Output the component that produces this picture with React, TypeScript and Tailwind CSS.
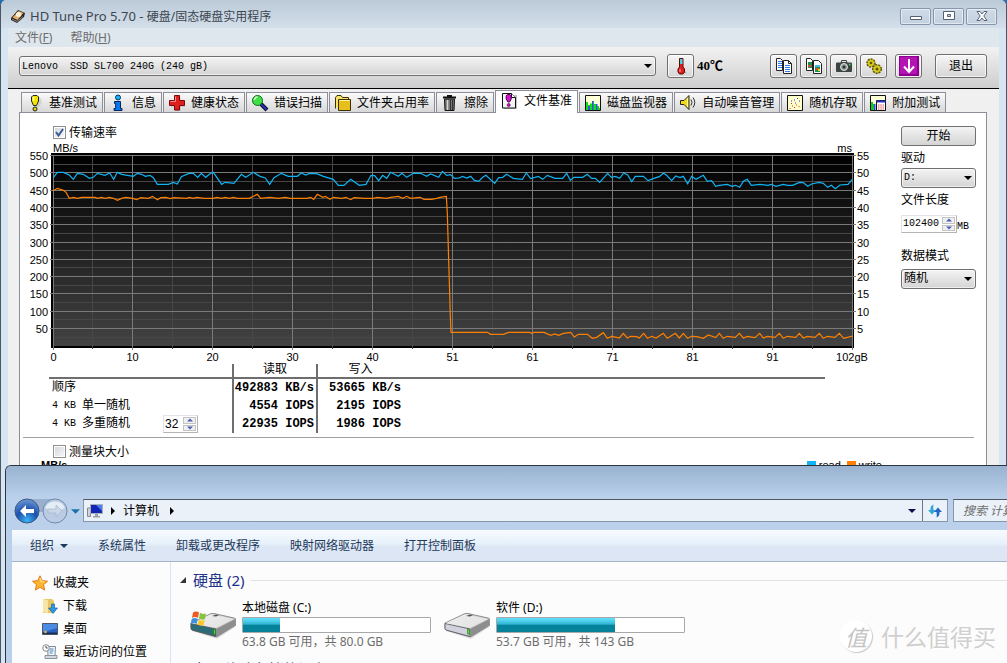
import React, { useState } from 'react';

const UI = "font-['Noto_Sans','Noto_Sans_CJK_SC',sans-serif]";
const SONG = "font-['Liberation_Mono','Noto_Sans_CJK_SC',monospace]";

/* ---------- small icons ---------- */

const ExclaimIcon = () => (
  <svg viewBox="0 0 18 18" className="h-[18px] w-[18px] shrink-0">
    <path d="M9.500 3.500h4l2 2v4l-3 3.500h-2z" fill="#bbb" opacity=".5" />
    <path d="M7 1.500h4l1.500 1.500v4L10.500 11.500h-3L5.500 7V3z" fill="#f2e600" stroke="#222" />
    <path d="M7.500 3v4" stroke="#fffcae" strokeWidth="1.500" />
    <circle cx="9" cy="15" r="2" fill="#e6d800" stroke="#222" />
  </svg>
);

const InfoIcon = () => (
  <svg viewBox="0 0 18 18" className="h-[18px] w-[18px] shrink-0">
    <circle cx="9" cy="3.500" r="2.500" fill="#19b4f5" stroke="#03336b" />
    <path d="M5.500 7.500h6v7h1.500v2h-8v-2h1.700v-5h-1.200z" fill="#0a78f0" stroke="#02235c" />
  </svg>
);

const CrossIcon = () => (
  <svg viewBox="0 0 18 18" className="h-[18px] w-[18px] shrink-0">
    <path d="M7.500 3.500h5v4h4.500v5h-4.500v4.500h-5v-4.500H3v-5h4.500z" fill="#999" opacity=".6" />
    <path d="M6.500 1.500h5v5h5v5h-5v4.500h-5v-4.500H1.500v-5h5z" fill="#e01f1f" stroke="#7a0808" />
    <path d="M7.500 2.500v5h-5" stroke="#ff8d8d" fill="none" />
  </svg>
);

const LensIcon = () => (
  <svg viewBox="0 0 18 18" className="h-[18px] w-[18px] shrink-0">
    <path d="M10 10l6 6" stroke="#111" strokeWidth="4" />
    <path d="M10 10l5.500 5.500" stroke="#2034c8" strokeWidth="2" />
    <circle cx="6.500" cy="6.500" r="5" fill="#3ee045" stroke="#0b6b17" />
    <path d="M3.500 6a3 3 0 0 1 3-3" stroke="#d8ffd0" strokeWidth="1.500" fill="none" />
  </svg>
);

const FolderIcon = () => (
  <svg viewBox="0 0 18 18" className="h-[18px] w-[18px] shrink-0">
    <path d="M1.500 14.500v-11l1.500-2h4l1.500 2h6v3" fill="#f8e36a" stroke="#3c3200" />
    <path d="M4.500 5.500h12v11h-12z" fill="#e8bf1a" stroke="#3c3200" />
    <path d="M5.500 6.500h10" stroke="#fff2a0" />
  </svg>
);

const TrashIcon = () => (
  <svg viewBox="0 0 18 18" className="h-[18px] w-[18px] shrink-0">
    <path d="M2 3.500h13M6 2h5" stroke="#111" strokeWidth="2" />
    <path d="M3.500 5h10l-.5 11.500H4z" fill="#777" stroke="#111" />
    <path d="M6.500 6v10" stroke="#d5d5d5" strokeWidth="1.500" />
    <path d="M9.500 6v10M11.500 6v10" stroke="#333" />
  </svg>
);

const FileMarkIcon = () => (
  <svg viewBox="0 0 18 18" className="h-[18px] w-[18px] shrink-0">
    <path d="M4 3h13v14H4z" fill="#999" opacity=".6" />
    <path d="M2.500 1.500h9l4 4v10.500h-13z" fill="#f4f4f4" stroke="#111" />
    <path d="M11.500 1.500v4h4" fill="#fff" stroke="#111" />
    <path d="M7.500 2.500h2.500l1.200 1.500v3L9.500 10h-1.500L6.200 7V4z" fill="#d412d4" stroke="#4c004c" />
    <circle cx="8.700" cy="13" r="1.500" fill="#d412d4" stroke="#4c004c" strokeWidth=".7" />
  </svg>
);

const MonitorIcon = () => (
  <svg viewBox="0 0 18 18" className="h-[18px] w-[18px] shrink-0">
    <path d="M1.500 1.500h15v15h-15z" fill="#ffffd8" stroke="#111" />
    <path d="M2 8h2v3h2v-1.500h2.500V7H10v3h3v2h2v2h1v2H2z" fill="#10e010" />
    <path d="M4 12h2v4H4zM8 7h1.500v9H8zM12 10h1.500v6H12z" fill="#3a4cf0" />
  </svg>
);

const SpeakerIcon = () => (
  <svg viewBox="0 0 18 18" className="h-[18px] w-[18px] shrink-0">
    <path d="M1.500 6.500h3.500l5-5v14l-5-5H1.500z" fill="#f0dc10" stroke="#222" />
    <path d="M8.500 4v9" stroke="#fff9a0" />
    <path d="M12 5.500q2 3 0 6M14 3.500q3.500 5 0 10" fill="none" stroke="#333" />
  </svg>
);

const ScatterIcon = () => (
  <svg viewBox="0 0 18 18" className="h-[18px] w-[18px] shrink-0">
    <path d="M1.500 1.500h15v15h-15z" fill="#ffffcc" stroke="#111" />
    <path d="M5 7h1M8 6h1M11 4.500h1M13 7h1M9 9h1" stroke="#2838e0" />
    <path d="M3.500 14.500h1M6 12h1M8 13.500h1M10 11h1M12.500 12.500h1M5 9.500h1" stroke="#e03020" />
  </svg>
);

const ExtraIcon = () => (
  <svg viewBox="0 0 18 18" className="h-[18px] w-[18px] shrink-0">
    <path d="M1.500 1.500h15v15h-15z" fill="#ffffd8" stroke="#111" />
    <path d="M2 8h2v2h2v6H2z" fill="#10c828" />
    <path d="M5 10h1.500v6H5z" fill="#3a4cf0" />
    <path d="M7.500 6.500h9v10h-9z" fill="#fff" stroke="#111" />
    <path d="M7.500 7.500h9" stroke="#2434c8" strokeWidth="2" />
    <path d="M9 11h6M9 13h6M9 15h6" stroke="#e05050" strokeDasharray="1.500 .8" />
  </svg>
);

const TitleIcon = () => (
  <svg viewBox="0 0 16 16" className="h-4 w-4">
    <path d="M1 9L8 1l7 3-1 4-7 6-6-3z" fill="#2a2420" />
    <path d="M2.500 8.500L8.500 2l5 2-6 7z" fill="#e8b06a" />
    <circle cx="8.500" cy="5.500" r="2.500" fill="#fff1dc" />
    <path d="M2 10l5 2.500 6-5" stroke="#8b8b8b" fill="none" />
  </svg>
);

const ThermoIcon = () => (
  <svg viewBox="0 0 18 18" className="h-[18px] w-[18px]">
    <path d="M10 12l5 4H9z" fill="#aaa" />
    <path d="M7.500 1.500h3.500v8.500l1.500 2v3l-1.500 2H7.500l-1.500-2v-3l1.500-2z" fill="#e31c1c" stroke="#5d0a0a" />
    <path d="M8 2h2.500v5H8z" fill="#4bd0e0" />
    <path d="M8 12v3" stroke="#ffb0b0" />
  </svg>
);

const CopyTextIcon = () => (
  <svg viewBox="0 0 18 18" className="h-[18px] w-[18px]">
    <path d="M1.500 1.500h4l2 2v10h-6z" fill="#fff" stroke="#222" />
    <path d="M3 4.500h4M3 6.500h4M3 8.500h4M3 10.500h4" stroke="#2f7de0" />
    <path d="M8.500 3.500h5l3 3v10h-8z" fill="#fff" stroke="#222" />
    <path d="M13.500 3.500v3h3" fill="none" stroke="#222" />
    <path d="M10 8.500h5M10 10.500h5M10 12.500h5M10 14.500h5" stroke="#2f7de0" />
  </svg>
);

const CopyImageIcon = () => (
  <svg viewBox="0 0 18 18" className="h-[18px] w-[18px]">
    <path d="M1.500 1.500h4l2 2v10h-6z" fill="#fff" stroke="#222" />
    <path d="M3 5h4v6H3z" fill="#1f8f4c" />
    <path d="M3 8h3v2H3z" fill="#e84a20" />
    <path d="M8.500 3.500h5l3 3v10h-8z" fill="#fff" stroke="#222" />
    <path d="M10 8h5v7h-5z" fill="#1f8f4c" />
    <path d="M10 8h5v2h-5z" fill="#42b9e8" />
    <path d="M11 11h2.500v2H11z" fill="#e84a20" />
    <path d="M13 12h2v2h-2z" fill="#f2d21c" />
  </svg>
);

const CameraIcon = () => (
  <svg viewBox="0 0 18 18" className="h-[18px] w-[18px]">
    <path d="M2 5.500h3.500l1-2.500h5l1 2.500H16q1 0 1 1v7.500q0 1-1 1H2q-1 0-1-1V6.500q0-1 1-1z" fill="#3d4543" />
    <path d="M7 4.500h4" stroke="#e8e8e8" />
    <circle cx="9" cy="10" r="3.500" fill="#8c9896" stroke="#e0e0e0" />
    <circle cx="9" cy="10" r="1.500" fill="#2b3331" />
    <path d="M14 7.500h1.500" stroke="#3de06a" strokeWidth="1.500" />
  </svg>
);

const GearsIcon = () => (
  <svg viewBox="0 0 18 18" className="h-[18px] w-[18px]">
    <circle cx="6" cy="6" r="4" fill="#d6c81e" stroke="#5e5606" strokeWidth="1.500" strokeDasharray="2 1" />
    <circle cx="6" cy="6" r="1.300" fill="#5e5606" />
    <circle cx="12" cy="12" r="4.300" fill="#d6c81e" stroke="#5e5606" strokeWidth="1.500" strokeDasharray="2 1" />
    <circle cx="12" cy="12" r="1.500" fill="#5e5606" />
  </svg>
);

const DownIcon = () => (
  <svg viewBox="0 0 20 20" className="h-5 w-5">
    <path d="M0 0h20v20H0z" fill="#8d008d" />
    <path d="M1 1h17v17H1z" fill="#b414b4" />
    <path d="M10 3v13M5 10.500l5 5.500 5-5.500" fill="none" stroke="#fff" strokeWidth="2" />
  </svg>
);

/* ---------- controls ---------- */

const Caret = ({ className = '' }: { className?: string }) => (
  <svg viewBox="0 0 8 4" className={`h-1 w-2 ${className}`} aria-hidden="true">
    <path d="M0 0h8L4 4z" fill="currentColor" />
  </svg>
);

type DropProps = { label: string; options: string[]; className: string; textClass: string };

const Drop = ({ label, options, className, textClass }: DropProps) => (
  <div className={`relative ${className}`}>
    <select
      aria-label={label}
      className={`h-5 w-full appearance-none rounded-[3px] border border-[#707070] bg-linear-to-b from-[#f4f4f4] to-[#d4d4d4] pr-5 pl-[2px] text-black ring-1 ring-white/60 ring-inset ${SONG} ${textClass}`}
    >
      {options.map((o) => (
        <option key={o}>{o}</option>
      ))}
    </select>
    <Caret className="pointer-events-none absolute top-2 right-1" />
  </div>
);

type SpinProps = { label: string; value: string; className: string };

const Spinner = ({ label, value, className }: SpinProps) => {
  const [current, setCurrent] = useState(value);
  const step = (n: number) => setCurrent(String(Number(current) + n));

  return (
    <span className={`inline-flex h-[18px] border border-[#b4b4b4] border-t-[#e0e3ea] border-l-[#e0e3ea] bg-white ${className}`}>
      <input
        aria-label={label}
        value={current}
        onChange={(e) => setCurrent(e.target.value)}
        className="w-0 min-w-0 flex-1 pl-px outline-none"
      />
      <span className="flex w-[15px] flex-col gap-px p-px">
        <button aria-label={`${label} +`} onClick={() => step(1)} className="flex flex-1 items-center justify-center border border-[#c4c4c4] bg-[#f0f0f0]">
          <Caret className="w-[6px] rotate-180 text-[#4a5fb0]" />
        </button>
        <button aria-label={`${label} -`} onClick={() => step(-1)} className="flex flex-1 items-center justify-center border border-[#c4c4c4] bg-[#f0f0f0]">
          <Caret className="w-[6px] text-[#4a5fb0]" />
        </button>
      </span>
    </span>
  );
};

const Check = ({ label, checked }: { label: string; checked?: boolean }) => (
  <label className="flex h-[15px] items-center gap-[3px]">
    <span className="grid h-[13px] w-[13px]">
      <input
        type="checkbox"
        defaultChecked={checked}
        className="peer col-start-1 row-start-1 appearance-none border border-[#8e8f8f] bg-linear-to-br from-[#d2d6db] to-[#f8f8f8] ring-1 ring-white ring-inset"
      />
      <svg viewBox="0 0 13 13" className="pointer-events-none invisible col-start-1 row-start-1 peer-checked:visible">
        <path d="M3 6l2.500 3.500L10 3" fill="none" stroke="#3c5a96" strokeWidth="2" />
      </svg>
    </span>
    <span className="pt-[2px]">{label}</span>
  </label>
);

const toolButton =
  'flex h-[24px] items-center justify-center rounded-[3px] border border-[#707070] bg-linear-to-b from-[#f6f6f6] to-[#d6d6d6] ring-1 ring-white/70 ring-inset';

/* ---------- chart ---------- */

const READ_A =
  '40,83 52,67 70,67 88,75 100,88 112,70 130,73 148,85 160,82 172,70 195,76 209,69 221,88 232,67 245,73 280,79 292,70 305,73 316,79 330,76 340,83 352,103 385,103 400,97 412,102 424,80 447,70 460,70 473,82 484,70 497,82 508,73 520,67 545,103 555,97 582,100 604,73 617,82 640,67 660,79 676,84 689,103 702,83 724,70 745,79 772,79 784,69 797,75 808,70 830,71 850,79 880,88 895,106 912,106 932,88 958,106 978,103 993,76 1004,77 1016,92 1028,76 1040,85 1052,67 1075,79 1086,70 1100,82 1120,70 1142,70 1160,79 1172,72 1196,82 1207,64 1220,76 1232,74 1243,85 1258,84';
const READ_B =
  '27,84 38,79 50,84 62,79 73,91 86,94 98,82 108,76 134,100 146,83 158,82 170,73 190,85 217,88 229,69 242,86 265,79 278,88 292,76 315,85 338,85 350,70 361,91 372,82 398,82 412,73 425,85 436,85 449,97 473,70 484,82 496,79 509,85 521,69 533,75 545,95 556,79 580,79 594,92 618,83 628,80 640,70 650,76 665,92 677,78 690,83 700,79 713,101 725,79 738,88 760,76 772,94 785,92 797,109 808,106 832,103 846,109 857,106 869,112 880,94 892,88 904,106 930,103 954,106 964,103 978,109 1000,103 1012,106 1028,106 1048,97 1060,98 1073,109 1085,102 1107,97 1120,100 1133,112 1144,106 1156,116 1170,105 1194,103 1207,88';
const WRITE_A =
  '40,122 52,115 70,121 78,127 88,145 100,142 112,145 125,142 165,142 173,145 184,142 196,145 208,142 220,145 232,151 245,145 257,142 278,145 290,149 302,143 325,145 338,139 352,149 362,143 378,142 390,146 402,143 440,145 448,142 460,145 470,142 492,145 520,145 530,142 545,145 555,142 568,145 580,142 592,145 628,145 640,139 652,133 662,145 690,142 715,145 736,142 750,145 800,145 812,142 821,148 832,133 848,142 856,139 870,148 880,142 905,145 918,142 932,149 942,143 975,145 1000,145 1012,142 1040,145 1052,142 1075,139 1088,145 1100,139 1112,145 1140,142 1152,148 1175,148 1190,145 1200,142 1219,139';
const WRITE_B =
  '49,48 52,102 55,205 58,306 61,408 63,457 172,457 182,463 220,463 236,457 298,457 306,460 312,457 342,457 362,466 374,462 386,466 400,460 422,457 433,471 445,463 472,463 487,475 500,472 520,458 532,475 545,469 560,472 568,474 580,460 592,474 602,469 620,470 628,474 641,460 653,475 665,469 678,474 700,460 712,475 736,460 748,474 760,460 773,475 785,469 800,470 820,475 835,465 857,473 868,460 880,475 892,469 916,472 928,460 940,474 952,469 975,473 989,460 1000,474 1012,469 1035,472 1048,460 1060,475 1072,469 1097,472 1108,460 1120,474 1132,469 1155,472 1168,460 1180,475 1192,469 1215,472 1228,460 1241,475 1252,472 1268,468';

const xLabels = ['0', '10', '20', '30', '40', '51', '61', '71', '81', '91', '102gB'];
const rows = Array.from({ length: 11 }, (_, i) => i);

const gridX = (i: number) => (i === 0 ? 27.5 : 26.5 + i * 80);
const gridY = (i: number) => Math.round(15 + i * 17.3) + 0.5;

const Curve = ({ points, x, y, color }: { points: string; x: number; y: number; color: string }) => (
  <polyline
    points={points}
    transform={`translate(${x} ${y}) scale(.33333)`}
    fill="none"
    stroke={color}
    strokeWidth="1.2"
    vectorEffect="non-scaling-stroke"
  />
);

const TransferChart = () => (
  <svg viewBox="0 0 850 224" className="block w-full font-['Liberation_Sans',sans-serif]" fontSize="11" role="img" aria-label="传输速率">
    <defs>
      <linearGradient id="plot" x1="0" y1="0" x2="0" y2="1">
        <stop offset="0" stopColor="#000" />
        <stop offset="1" stopColor="#434343" />
      </linearGradient>
    </defs>
    <text x="27" y="12">MB/s</text>
    <text x="826" y="12" textAnchor="end">ms</text>
    <path d="M25 13h803v195H25z" fill="#000" />
    <path d="M27 15h800v191H27z" fill="url(#plot)" />

    {rows.map((i) => (
      <g key={i}>
        <path d={`M27 ${gridY(i + 0.5)}h800`} stroke="#474747" />
        {i > 0 && i < 10 && <path d={`M${gridX(i + 0.5)} 15v194`} stroke="#474747" />}
      </g>
    ))}
    <path d="M66.500 15v194" stroke="#474747" />
    {rows.map((i) => (
      <g key={i}>
        <path d={`M24 ${gridY(i)}h806`} stroke="#7a7a7a" />
        <path d={`M${gridX(i)} 15v195`} stroke="#7a7a7a" />
        <text x="22" y={gridY(i) + 4} textAnchor="end">
          {550 - i * 50}
        </text>
        <text x="831" y={gridY(i) + 4}>
          {55 - i * 5}
        </text>
        <text x={i === 10 ? 826 : gridX(i)} y="221" textAnchor="middle">
          {xLabels[i]}
        </text>
      </g>
    ))}

    <Curve points={READ_A} x={14} y={10} color="#10b4f4" />
    <Curve points={READ_B} x={424} y={10} color="#10b4f4" />
    <Curve points={WRITE_A} x={14} y={10} color="#ff8000" />
    <Curve points={WRITE_B} x={404} y={40} color="#ff8000" />
  </svg>
);

const Results = () => (
  <table className="w-full table-fixed border-collapse leading-[18px]">
    <colgroup>
      <col className="w-[184px]" />
      <col className="w-[84px]" />
      <col className="w-[86px]" />
      <col />
    </colgroup>
    <thead>
      <tr className="h-[14px] border-b-2 border-[#6e6e6e] leading-[13px]">
        <th className="p-0" />
        <th className="border-l-2 border-[#6e6e6e] p-0 font-normal">读取</th>
        <th className="border-l-2 border-[#6e6e6e] p-0 font-normal">写入</th>
        <th className="p-0" />
      </tr>
    </thead>
    <tbody>
      {[
        ['', '顺序', '492883 KB/s', '53665 KB/s'],
        ['4 KB ', '单一随机', '4554 IOPS', '2195 IOPS'],
        ['4 KB ', '多重随机', '22935 IOPS', '1986 IOPS']
      ].map(([size, name, read, write], i) => (
        <tr key={name} className="h-[18px]">
          <th className="p-0 pl-[3px] text-left font-normal">
            <span className="flex h-[18px] items-center whitespace-pre">
              <span className="text-[10px]">{size}</span>
              {name}
              {i === 2 && (
                <span className="ml-[33px] flex font-['Liberation_Sans',sans-serif]">
                  <Spinner label="队列深度" value="32" className="w-[35px]" />
                </span>
              )}
            </span>
          </th>
          <td className="border-l-2 border-[#6e6e6e] p-0 pr-[2px] text-right font-bold whitespace-nowrap">{read}</td>
          <td className="border-l-2 border-[#6e6e6e] p-0 pr-[2px] text-right font-bold whitespace-nowrap">{write}</td>
          <td className="p-0" />
        </tr>
      ))}
    </tbody>
  </table>
);

/* ---------- HD Tune window ---------- */

const tabs = [
  { name: '基准测试', icon: ExclaimIcon },
  { name: '信息', icon: InfoIcon },
  { name: '健康状态', icon: CrossIcon },
  { name: '错误扫描', icon: LensIcon },
  { name: '文件夹占用率', icon: FolderIcon },
  { name: '擦除', icon: TrashIcon },
  { name: '文件基准', icon: FileMarkIcon },
  { name: '磁盘监视器', icon: MonitorIcon },
  { name: '自动噪音管理', icon: SpeakerIcon },
  { name: '随机存取', icon: ScatterIcon },
  { name: '附加测试', icon: ExtraIcon }
];

const captionButton =
  'flex h-[17px] w-[31px] items-center justify-center rounded-[2px] border border-[#8796ab] bg-linear-to-b from-[#cfdbe7] to-[#c3d0de] ring-1 ring-white/50 ring-inset';

const TitleBar = () => (
  <header className={`flex h-7 items-center justify-between bg-linear-to-b from-[#bccad8] to-[#d3dfea] px-[9px] ${UI}`}>
    <h1 className="flex items-center gap-1 pt-[5px] text-[12px] text-[#3c4650]">
      <TitleIcon />
      <span className="leading-5">
        <span className="text-[13px]">HD Tune Pro 5.70 - </span>
        硬盘/固态硬盘实用程序
      </span>
    </h1>
    <div className="flex gap-[2px] pt-1">
      <button aria-label="最小化" className={captionButton}>
        <svg viewBox="0 0 12 12" className="h-3 w-3">
          <path d="M.5 6.500h11v3H.5z" fill="#fff" stroke="#566273" />
        </svg>
      </button>
      <button aria-label="最大化" className={captionButton}>
        <svg viewBox="0 0 12 12" className="h-3 w-3">
          <path d="M.5 1.500h11v8H.5zM4.500 4.500h3v2h-3z" fill="#fff" fillRule="evenodd" stroke="#566273" />
        </svg>
      </button>
      <button aria-label="关闭" className={captionButton}>
        <svg viewBox="0 0 12 12" className="h-3 w-3">
          <path d="M1 1.500h3l2 2.500 2-2.500h3L7.800 6l3.200 4.500H8L6 8l-2 2.500H1L4.200 6z" fill="#fff" stroke="#566273" />
        </svg>
      </button>
    </div>
  </header>
);

const TuneToolbar = () => (
  <div className="flex h-[42px] items-start border-b border-black bg-linear-to-b from-[#f2f2f2] to-[#cecece] pt-[7px] pr-3 pl-[11px]">
    <Drop
      label="硬盘"
      options={['Lenovo\u00a0\u00a0SSD SL700 240G (240 gB)']}
      className="mt-[2px] flex-1"
      textClass="text-[10px]"
    />
    <button aria-label="温度" className={`ml-[11px] w-[27px] ${toolButton}`}>
      <ThermoIcon />
    </button>
    <span className="ml-[3px] w-[73px] font-['Liberation_Serif','Noto_Sans_CJK_SC',serif] text-[13px] leading-[24px] font-bold">40℃</span>
    <div className="flex gap-[3px]">
      <button aria-label="复制文本" className={`w-[27px] ${toolButton}`}>
        <CopyTextIcon />
      </button>
      <button aria-label="复制图像" className={`w-[27px] ${toolButton}`}>
        <CopyImageIcon />
      </button>
      <button aria-label="截图" className={`w-[27px] ${toolButton}`}>
        <CameraIcon />
      </button>
      <button aria-label="选项" className={`w-[27px] ${toolButton}`}>
        <GearsIcon />
      </button>
    </div>
    <button aria-label="保存" className={`ml-2 w-[27px] ${toolButton}`}>
      <DownIcon />
    </button>
    <button className={`ml-[13px] w-[52px] pt-[2px] ${toolButton}`}>退出</button>
  </div>
);

const TuneWindow = () => {
  const [active, setActive] = useState('文件基准');

  return (
    <section className="flex h-full flex-col overflow-hidden rounded-t-[6px] border-x border-[#4b5663] bg-[#d7e4f2]">
      <TitleBar />
      <div className={`mx-[7px] flex h-[19px] items-center gap-[18px] bg-[#dee6ee] pl-[7px] text-[12px] text-[#6d6d6d] ${UI}`}>
        <button>
          文件(<u>F</u>)
        </button>
        <button>
          帮助(<u>H</u>)
        </button>
      </div>
      <div className={`mx-[7px] flex min-h-0 flex-1 flex-col bg-[#f0f0f0] text-[12px] text-black ${SONG}`}>
        <TuneToolbar />
        <div role="tablist" className="flex h-[23px] items-end gap-px pl-[13px]">
          {tabs.map(({ name, icon: Icon }) => (
            <button
              key={name}
              role="tab"
              aria-selected={active === name}
              onClick={() => setActive(name)}
              className={`flex shrink-0 items-center border-x border-t border-[#8c8e9a] pr-[5px] pl-1 whitespace-nowrap ${
                active === name
                  ? 'relative z-10 -mb-px h-[23px] gap-[6px] bg-white pb-[2px]'
                  : 'h-5 gap-[5px] bg-linear-to-b from-[#fafafa] to-[#d8d8d8]'
              }`}
            >
              <Icon />
              <span className="pt-[2px]">{name}</span>
            </button>
          ))}
        </div>
        <main className="mr-3 ml-[11px] flex-1 border border-[#8c8e9a] bg-white pt-3">
          <div className="flex gap-[25px] pr-[10px] pl-[6px]">
            <div className="min-w-0 flex-1">
              <div className="pl-[27px]">
                <Check label="传输速率" checked />
              </div>
              <TransferChart />
              <div className="mr-[51px] ml-[23px]">
                <Results />
              </div>
            </div>
            <div className="flex w-[75px] shrink-0 flex-col pt-px leading-4">
              <button className="h-5 rounded-[3px] border border-[#707070] bg-linear-to-b from-[#f4f4f4] to-[#d4d4d4] pt-px">开始</button>
              <span className="mt-[5px] mb-px">驱动</span>
              <Drop label="驱动" options={['D:']} className="" textClass="text-[10px]" />
              <span className="mt-[5px] mb-[6px]">文件长度</span>
              <div className="flex items-end text-[10px]">
                <Spinner label="文件长度" value="102400" className="w-[56px] shrink-0" />
                <span className="leading-3">MB</span>
              </div>
              <span className="mt-4 mb-1">数据模式</span>
              <Drop label="数据模式" options={['随机', '顺序']} className="" textClass="text-[12px]" />
            </div>
          </div>
          <hr className="mt-1 mr-3 ml-[3px] border-[#a0a0a0]" />
          <div className="mt-[6px] pl-[33px]">
            <Check label="测量块大小" />
          </div>
          <div className="flex justify-between pr-[104px] pl-[21px] font-['Liberation_Sans',sans-serif] text-[11px] leading-3">
            <b>MB/s</b>
            <span className="flex items-center gap-[3px]">
              <i className="h-2 w-[9px] bg-[#10b4f4]" />
              read
              <i className="ml-[3px] h-2 w-[9px] bg-[#ff8000]" />
              write
            </span>
          </div>
        </main>
      </div>
    </section>
  );
};

/* ---------- Explorer window ---------- */

const StarIcon = () => (
  <svg viewBox="0 0 16 16" className="h-4 w-4">
    <path d="M8 .8l2.200 4.900 5.300.5-4 3.600 1.200 5.300L8 12.300l-4.700 2.800 1.200-5.300-4-3.600 5.300-.5z" fill="#fdb52c" stroke="#e0791a" />
    <path d="M8 3l1.300 3.500 3 .5" fill="none" stroke="#ffe79a" strokeWidth="1.200" />
  </svg>
);

const DownloadIcon = () => (
  <svg viewBox="0 0 16 16" className="h-4 w-4">
    <path d="M1 1h9l2 2v12H1z" fill="#e9c765" />
    <path d="M1 1l5 1.500V15L1 14z" fill="#f8e6a4" />
    <path d="M9.500 6h3v4h3L11 15.500 6.500 10h3z" fill="#2f96e0" stroke="#1767a8" strokeWidth=".7" />
  </svg>
);

const DesktopIcon = () => (
  <svg viewBox="0 0 16 16" className="h-4 w-4">
    <path d="M.5 2.500h15v11H.5z" fill="#2a62c4" stroke="#4d5968" />
    <path d="M1 3h14v4L1 11z" fill="#4a8be4" />
    <path d="M1 11.500h14v1.500H1z" fill="#132c5a" />
    <circle cx="3.500" cy="11" r="1.300" fill="#f2b53a" />
  </svg>
);

const RecentIcon = () => (
  <svg viewBox="0 0 16 16" className="h-4 w-4">
    <path d="M5.500 2.500h8l-.5 9H6z" fill="#eef4fa" stroke="#7f8c99" />
    <path d="M7.500 5h4M7.500 7h4M7.500 9h3" stroke="#4a86bc" />
    <path d="M3 11.500h12v3H3z" fill="#d2d8de" stroke="#8a949e" />
    <circle cx="4" cy="4" r="3.300" fill="#fafafa" stroke="#8a8a8a" />
    <path d="M4 2v2h1.700" stroke="#555" fill="none" />
  </svg>
);

const ComputerIcon = () => (
  <svg viewBox="0 0 17 16" className="h-4 w-[17px]">
    <path d="M1.500 5h3v8.500h-3z" fill="#d0d4d8" stroke="#808890" />
    <path d="M4.500 1.500h12v9h-12z" fill="#1226b4" stroke="#a8b0b8" />
    <path d="M10 2h6v6z" fill="#4f7bf0" />
    <path d="M9 11h3v2h2v1.500H7V13h2z" fill="#98a0a8" />
  </svg>
);

const DriveIcon = ({ system }: { system?: boolean }) => (
  <svg viewBox="0 0 46 28" className="h-7 w-[46px] shrink-0">
    <defs>
      <linearGradient id="metal" x1="0" y1="0" x2="1" y2="1">
        <stop offset="0" stopColor="#fafafa" />
        <stop offset=".6" stopColor="#c4c4c4" />
        <stop offset="1" stopColor="#747474" />
      </linearGradient>
    </defs>
    <path d="M2 17l24 9 19-14v4L27 28 2 20z" fill="#c8c8c8" opacity=".6" />
    <path d="M1 12L20 3q2-1 4-.5l20 4.500q2 .5 2 2v5L28 25q-1 1-3 .5L2 19q-1-.5-1-2z" fill="url(#metal)" stroke="#777" strokeWidth=".8" />
    <path d="M1 12.500l25 5.500v7.500L2 19q-1-.5-1-2z" fill={system ? '#2c6c78' : '#d2d2de'} stroke="#555" strokeWidth=".8" />
    <path d="M26 18L45.500 8v5.500L28 25l-2 .5z" fill="#8e8e8e" />
    <path d="M2 12L21 3.500l23 4.500-18 9z" fill="#ececec" opacity=".8" />
    <path d="M22 5l4-1.500 3 .8-3 1.300z" fill="#555" />
    <path d="M23.500 18l2 .5v5l-2-.5z" fill="#4be030" stroke="#1c5c12" strokeWidth=".5" />
    {system && (
      <g>
        <path d="M3 1.500q3-2 6 0L8 7q-3-2-6 0z" fill="#ee5a24" />
        <path d="M10 1.800q3 2 6 .5L15 8q-3 1.500-6-.5z" fill="#86c440" />
        <path d="M1.700 8q3-2 6 0l-1 5q-3-2-6 0z" fill="#3d92e0" />
        <path d="M8.700 8.500q3 2 6 .5l-1 5q-3 1.500-6-.5z" fill="#fcc72c" />
      </g>
    )}
  </svg>
);

const places = [
  { name: '下载', icon: DownloadIcon },
  { name: '桌面', icon: DesktopIcon },
  { name: '最近访问的位置', icon: RecentIcon }
];

const drives = [
  { name: '本地磁盘 (C:)', used: 20, info: '63.8 GB 可用，共 80.0 GB', system: true },
  { name: '软件 (D:)', used: 63, info: '53.7 GB 可用，共 143 GB', system: false }
];

const Group = ({ title }: { title: string }) => (
  <h2 className="flex items-center gap-[7px] text-[15px] leading-5 text-[#1e3287]">
    <svg viewBox="0 0 6 6" className="h-[6px] w-[6px]">
      <path d="M6 0v6H0z" fill="#333" />
    </svg>
    {title}
    <span className="h-px flex-1 bg-[#e2e2e2]" />
  </h2>
);

const ExplorerWindow = () => (
  <section
    className={`absolute top-[465px] -right-16 bottom-0 left-[5px] flex flex-col overflow-hidden rounded-tl-[6px] border-t border-l border-[#2b3440] bg-[#bad0ea] text-[12px] ${UI}`}
  >
    <div className="flex h-16 items-end bg-linear-to-b from-[#98b2d0] to-[#bbd1eb] to-50% pb-2 pl-2">
      <svg viewBox="0 0 54 26" className="-mb-[2px] h-[26px] w-[54px]">
        <defs>
          <radialGradient id="back" cx=".5" cy=".9" r=".9">
            <stop offset="0" stopColor="#3ab4f4" />
            <stop offset=".5" stopColor="#1a4fae" />
            <stop offset="1" stopColor="#6f9ad4" />
          </radialGradient>
        </defs>
        <path d="M13 1h28v10q-14 6-28 0z" fill="#98b0cd" />
        <circle cx="13" cy="13" r="12" fill="url(#back)" stroke="#3d5680" />
        <path d="M6 13l6-6v4h8v4h-8v4z" fill="#fff" />
        <circle cx="41" cy="13" r="12" fill="#b9cce4" stroke="#7188a8" />
        <path d="M31 10a11 11 0 0 1 20 0q-10 5-20 0z" fill="#e4edf6" />
        <path d="M48 13l-6-6v4h-8v4h8v4z" fill="#c9d7e8" stroke="#9fb2ca" strokeWidth=".6" />
      </svg>
      <Caret className="mb-2 ml-[3px] h-[5px] w-[9px] text-[#1d6fa5]" />
      <div className="ml-[3px] flex h-[23px] flex-1 items-center border border-[#8796aa] border-t-[#4d5866] bg-[#eaf1f9] text-black">
        <div className="flex flex-1 items-center gap-2 pl-[2px]">
          <ComputerIcon />
          <svg viewBox="0 0 4 8" className="h-2 w-1">
            <path d="M0 0v8l4-4z" />
          </svg>
          <button>计算机</button>
          <svg viewBox="0 0 4 8" className="ml-[3px] h-2 w-1">
            <path d="M0 0v8l4-4z" />
          </svg>
        </div>
        <Caret className="mr-[6px] text-[#0c0c50]" />
        <button aria-label="刷新" className="flex h-full w-[25px] items-center justify-center border-l border-[#6b7786]">
          <svg viewBox="0 0 14 14" className="h-[14px] w-[14px]">
            <path d="M5.500.5Q2 2 2.500 6H0l4 4.500L8 6H5.500Q5 3 5.500.5z" fill="#2ea6d8" />
            <path d="M8.500 13.500q3.500-1.500 3-5.500H14l-4-4.500L6 8h2.500q.5 3 0 5.500z" fill="#2466c4" />
          </svg>
        </button>
      </div>
      <input
        aria-label="搜索"
        placeholder="搜索 计算机"
        className="ml-[5px] h-[23px] w-[118px] border border-[#8796aa] border-t-[#4d5866] bg-[#eaf1f9] pl-[9px] italic placeholder:text-[#6d6d6d]"
      />
    </div>
    <nav className="ml-[6px] flex h-8 shrink-0 items-center gap-[30px] border-b border-[#a3b3c8] bg-linear-to-b from-[#f7fbff] from-0% via-[#e6f0fa] via-45% to-[#dce6f4] to-55% pl-[18px] text-[#1e395b]">
      <button className="flex items-center gap-[6px]">
        组织 <Caret />
      </button>
      <button>系统属性</button>
      <button>卸载或更改程序</button>
      <button>映射网络驱动器</button>
      <button>打开控制面板</button>
    </nav>
    <div className="ml-[6px] flex min-h-0 flex-1 bg-[#fcfcfc] text-black">
      <aside className="w-[159px] shrink-0 border-r border-[#d6e5f5] pt-[9px] pl-5">
        <a href="#favorites" className="flex h-[23px] items-center gap-[5px]">
          <StarIcon />
          收藏夹
        </a>
        {places.map(({ name, icon: Icon }) => (
          <a key={name} href={`#${name}`} className="flex h-[23px] items-center gap-[5px] pl-[10px]">
            <Icon />
            {name}
          </a>
        ))}
      </aside>
      <div className="flex-1 overflow-hidden pt-2 pl-[9px]">
        <Group title="硬盘 (2)" />
        <div className="mt-[9px] mb-2 flex gap-[13px] pl-[10px]">
          {drives.map((d) => (
            <div key={d.name} className="flex w-[241px] items-center gap-[6px]">
              <DriveIcon system={d.system} />
              <div className="flex-1 leading-[18px]">
                <div>{d.name}</div>
                <div className="h-4 rounded-[1px] border border-[#a8a8a8] bg-white">
                  <div
                    className="h-full bg-linear-to-b from-[#5cdaf5] from-10% via-[#2cb4d2] via-45% to-[#06839b] to-50%"
                    style={{ width: `${d.used}%` }}
                  />
                </div>
                <div className="text-[#6d6d6d]">{d.info}</div>
              </div>
            </div>
          ))}
        </div>
        <Group title="有可移动存储的设备 (1)" />
      </div>
    </div>
  </section>
);

const App = () => (
  <div className="relative h-screen overflow-hidden bg-[#1c6fb8]">
    <TuneWindow />
    <ExplorerWindow />
    <div className="absolute right-[11px] bottom-[10px] flex items-center gap-[9px] font-['Noto_Sans_CJK_SC',sans-serif] text-[23px] text-[#cfcfcf] text-shadow-[1px_1px_0_#ffffff]">
      <span className="flex h-8 w-8 items-center justify-center rounded-full bg-white text-[22px] leading-8 text-[#c4c4c4] italic shadow-[1px_1px_1px_#c8c8c8]">值</span>
      什么值得买
    </div>
  </div>
);

export default App;
